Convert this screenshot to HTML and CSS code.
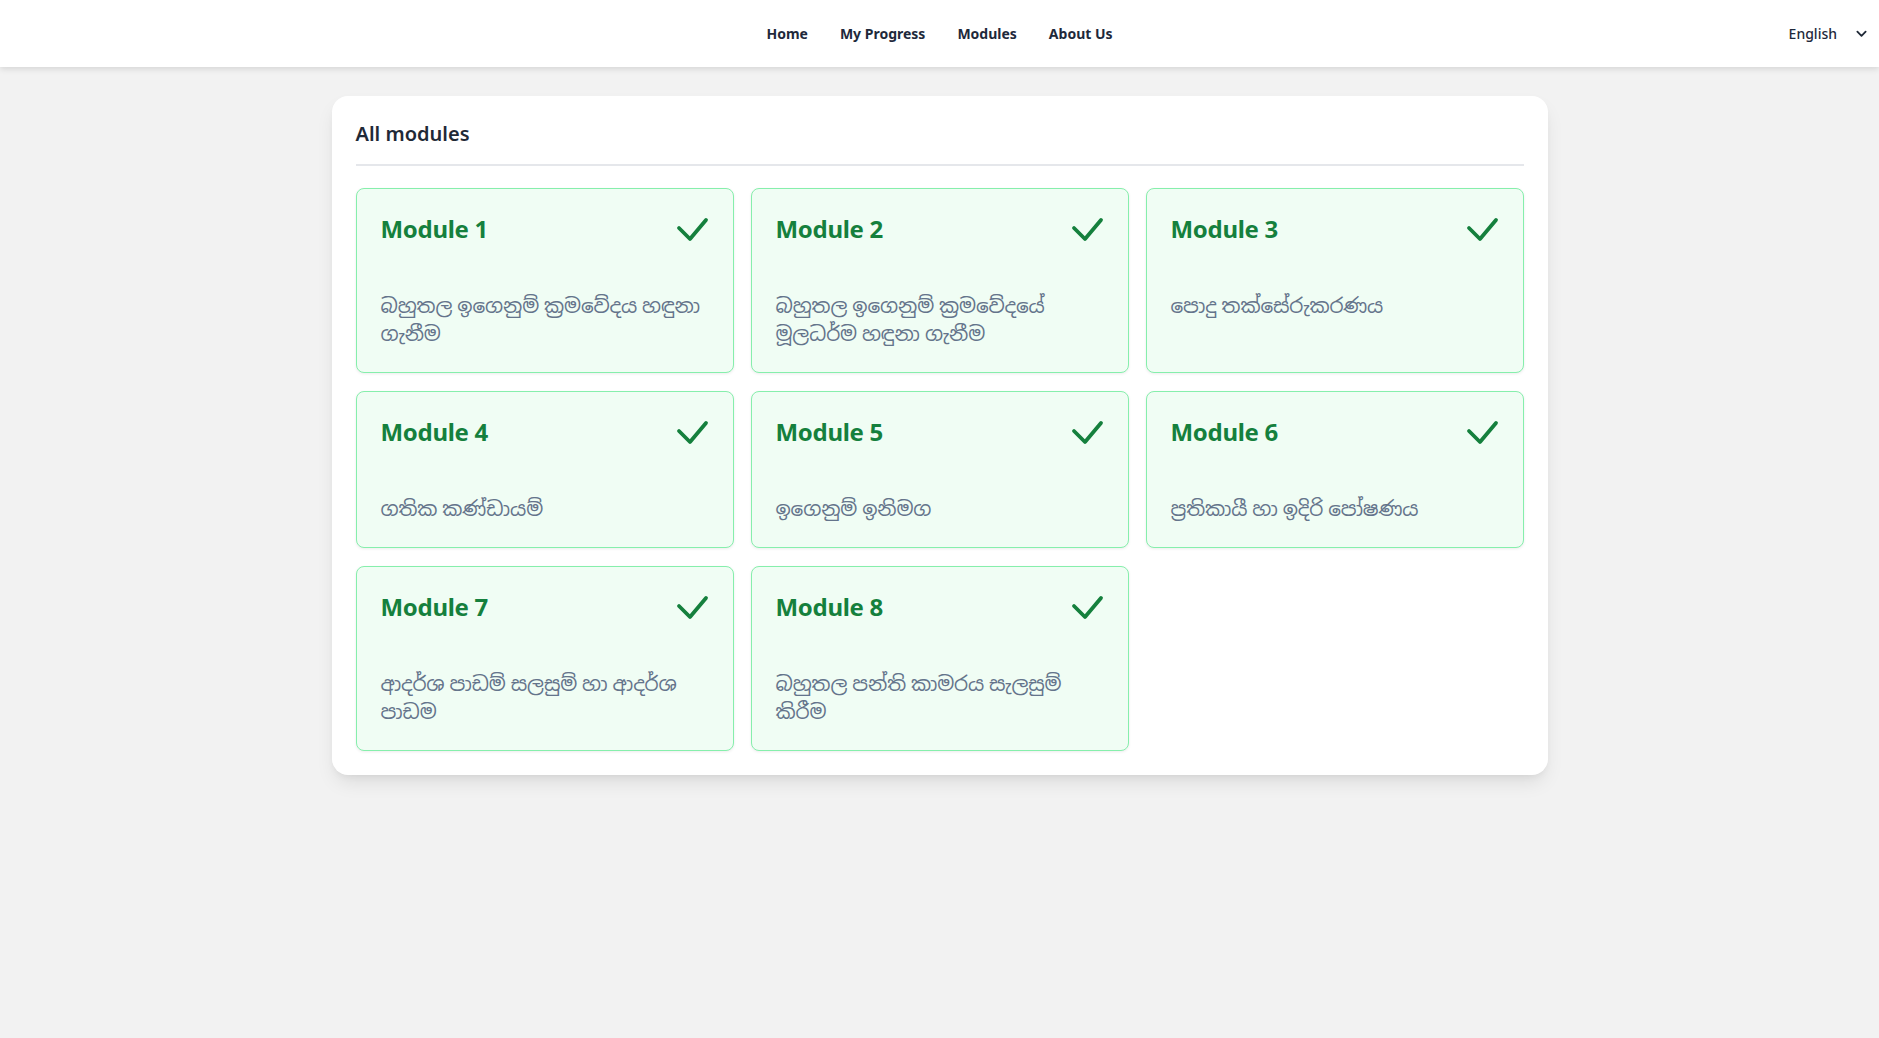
FILE: index.html
```html
<!DOCTYPE html>
<html lang="en">
<head>
<meta charset="utf-8">
<title>All modules</title>
<link rel="stylesheet" href="styles.css">
</head>
<body>
<header class="topbar">
  <nav class="nav">
    <a class="nav-link" href="#">Home</a>
    <a class="nav-link" href="#">My Progress</a>
    <a class="nav-link" href="#">Modules</a>
    <a class="nav-link" href="#">About Us</a>
  </nav>
  <div class="lang">
    <span>English</span>
    <svg class="chev" viewBox="0 0 12 8" width="11" height="8"><path d="M1.5 1.5 L6 6 L10.5 1.5" fill="none" stroke="#1f2937" stroke-width="2" stroke-linecap="round" stroke-linejoin="round"/></svg>
  </div>
</header>
<main class="page">
  <section class="panel">
    <h1 class="panel-title">All modules</h1>
    <div class="grid">
      <div class="card"><div class="card-head"><span class="card-title">Module 1</span><svg class="check" viewBox="0 0 35 26" width="35" height="26"><path d="M5 12 L16 23 L32 4" /></svg></div><p class="card-desc">බහුතල ඉගෙනුම් ක්‍රමවේදය හඳුනා ගැනීම</p></div>
      <div class="card"><div class="card-head"><span class="card-title">Module 2</span><svg class="check" viewBox="0 0 35 26" width="35" height="26"><path d="M5 12 L16 23 L32 4" /></svg></div><p class="card-desc">බහුතල ඉගෙනුම් ක්‍රමවේදයේ මූලධර්ම හඳුනා ගැනීම</p></div>
      <div class="card"><div class="card-head"><span class="card-title">Module 3</span><svg class="check" viewBox="0 0 35 26" width="35" height="26"><path d="M5 12 L16 23 L32 4" /></svg></div><p class="card-desc">පොදු තක්සේරුකරණය</p></div>
      <div class="card"><div class="card-head"><span class="card-title">Module 4</span><svg class="check" viewBox="0 0 35 26" width="35" height="26"><path d="M5 12 L16 23 L32 4" /></svg></div><p class="card-desc">ගතික කණ්ඩායම්</p></div>
      <div class="card"><div class="card-head"><span class="card-title">Module 5</span><svg class="check" viewBox="0 0 35 26" width="35" height="26"><path d="M5 12 L16 23 L32 4" /></svg></div><p class="card-desc">ඉගෙනුම් ඉනිමග</p></div>
      <div class="card"><div class="card-head"><span class="card-title">Module 6</span><svg class="check" viewBox="0 0 35 26" width="35" height="26"><path d="M5 12 L16 23 L32 4" /></svg></div><p class="card-desc">ප්‍රතිකායී හා ඉදිරි පෝෂණය</p></div>
      <div class="card"><div class="card-head"><span class="card-title">Module 7</span><svg class="check" viewBox="0 0 35 26" width="35" height="26"><path d="M5 12 L16 23 L32 4" /></svg></div><p class="card-desc">ආදර්ශ පාඩම් සලසුම් හා ආදර්ශ පාඩම</p></div>
      <div class="card"><div class="card-head"><span class="card-title">Module 8</span><svg class="check" viewBox="0 0 35 26" width="35" height="26"><path d="M5 12 L16 23 L32 4" /></svg></div><p class="card-desc">බහුතල පන්ති කාමරය සැලසුම් කිරීම</p></div>
    </div>
  </section>
</main>
</body>
</html>
```
FILE: styles.css
```css
* { box-sizing: border-box; }
html, body { margin: 0; padding: 0; }
body {
  background: #f2f2f2;
  font-family: "Noto Sans", "Open Sans", sans-serif;
  color: #1f2937;
  min-height: 1038px;
}
.topbar {
  height: 67px;
  background: #ffffff;
  box-shadow: 0 2px 6px rgba(0,0,0,0.12);
  display: flex;
  align-items: center;
  justify-content: center;
  position: relative;
}
.nav {
  display: flex;
  gap: 32px;
  align-items: center;
  margin-top: -1px;
}
.nav-link {
  font-size: 14px;
  font-weight: 700;
  color: #1e293b;
  text-decoration: none;
}
.lang {
  position: absolute;
  right: 12px;
  top: 0;
  height: 67px;
  display: flex;
  align-items: center;
  gap: 19px;
  font-size: 14px;
  font-weight: 500;
  color: #1e293b;
}
.chev { margin-top: 1px; }
.page {
  padding-top: 29px;
  display: flex;
  justify-content: center;
}
.panel {
  width: 1216px;
  background: #ffffff;
  border-radius: 16px;
  padding: 24px;
  box-shadow: 0 10px 20px -4px rgba(0,0,0,0.10), 0 4px 8px -4px rgba(0,0,0,0.08);
}
.panel-title {
  margin: 0 0 22px 0;
  font-size: 20px;
  line-height: 28px;
  font-weight: 600;
  color: #1f2937;
  padding-bottom: 16px;
  border-bottom: 2px solid #e5e7eb;
}
.grid {
  display: grid;
  grid-template-columns: repeat(3, 1fr);
  column-gap: 17px;
  row-gap: 18px;
}
.card {
  background: #f0fdf4;
  border: 1px solid #86efac;
  border-radius: 8px;
  padding: 24px;
  box-shadow: 0 1px 3px rgba(0,0,0,0.08);
}
.card-head {
  display: flex;
  justify-content: space-between;
  align-items: center;
  height: 32px;
}
.card-title {
  font-size: 24px;
  line-height: 32px;
  font-weight: 700;
  letter-spacing: -0.3px;
  color: #15803d;
}
.check path {
  fill: none;
  stroke: #15803d;
  stroke-width: 3.8;
  stroke-linecap: round;
  stroke-linejoin: round;
}
.card-desc {
  margin: 47px 0 0 0;
  font-size: 20px;
  line-height: 28px;
  letter-spacing: -0.15px;
  color: #64748b;
  font-family: "Noto Sans", "Noto Sans Sinhala", sans-serif;
}
```
